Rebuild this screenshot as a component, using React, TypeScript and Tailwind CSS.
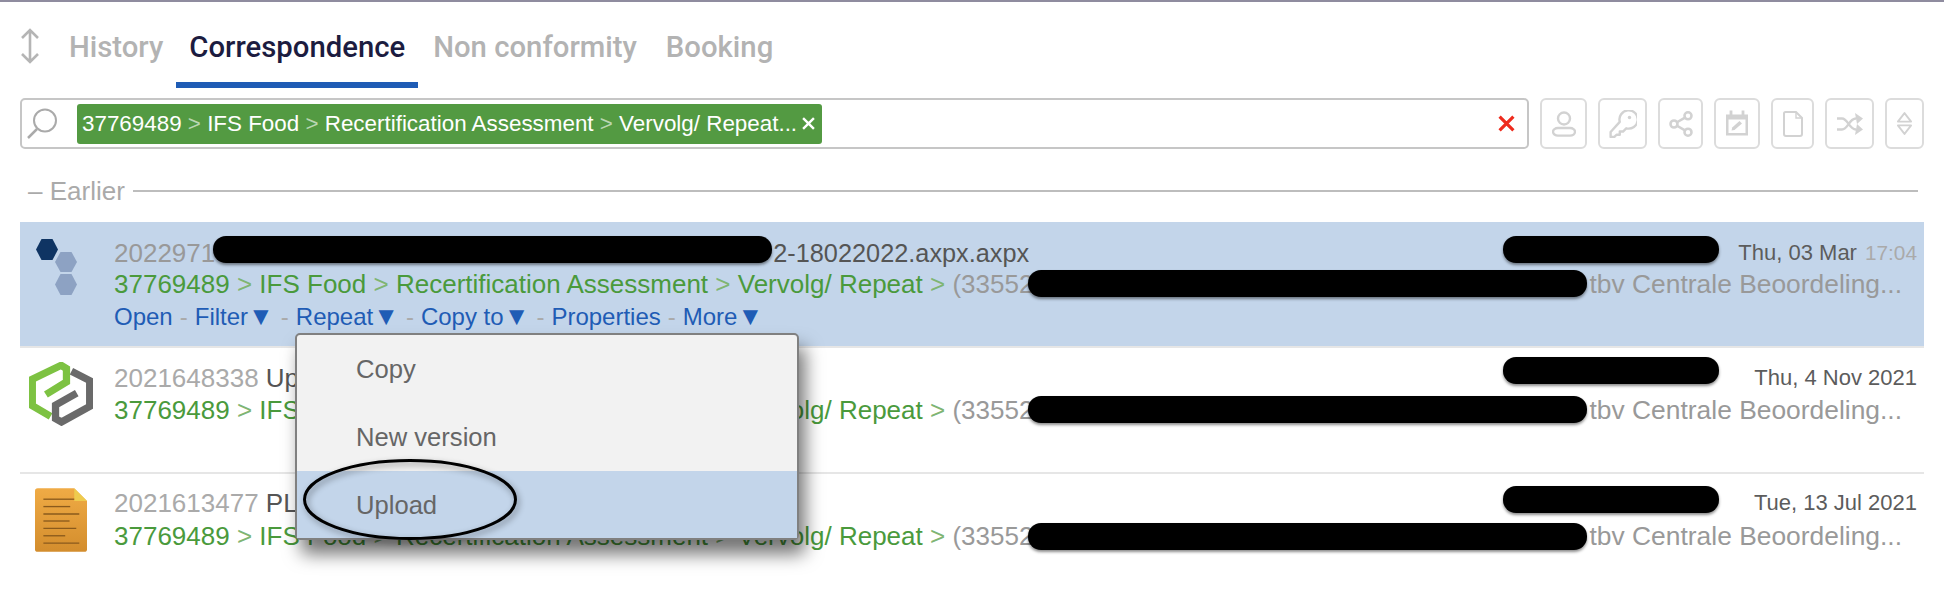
import { Share2 } from 'lucide-react';

const breadcrumb = ['37769489', 'IFS Food', 'Recertification Assessment', 'Vervolg/ Repeat'];

function Crumbs() {
  return (
    <>
      {breadcrumb.map((part) => (
        <span key={part}>
          {part} <span className="text-[#7fb573]">&gt;</span>{' '}
        </span>
      ))}
    </>
  );
}

function Redaction({ className }: { className: string }) {
  return <div className={`absolute h-[27px] rounded-[13px] bg-black shadow-[0_2px_3px_rgba(0,0,0,0.45)] ${className}`} />;
}

function Hexagons() {
  return (
    <svg viewBox="0 0 41 56" className="absolute left-[16px] top-[17px] w-[41px] h-[56px]">
      <polygon points="0,10.5 5.5,0 16.5,0 22,10.5 16.5,21 5.5,21" fill="#0f3463" />
      <polygon points="19,23 24.5,13 35.5,13 41,23 35.5,33 24.5,33" fill="#8da2c3" />
      <polygon points="19,45.5 24.5,35 35.5,35 41,45.5 35.5,56 24.5,56" fill="#8da2c3" />
    </svg>
  );
}

function HexLogo() {
  return (
    <svg viewBox="87 50 193 193" className="absolute left-[9px] top-[14px] w-[64px] h-[64px]">
      <path d="M152 214 L97 182 V102 L184 60 L200 70 V110 L138 148" fill="none" stroke="#7dc242" strokeWidth="22" />
      <path d="M215 78 L270 106 V184 L185 231 L167 221 V180 L231 144" fill="none" stroke="#6a6a6a" strokeWidth="22" />
    </svg>
  );
}

function DocIcon() {
  const lines = [
    [463, 222],
    [485, 210],
    [507, 237],
    [528, 208],
    [550, 228],
    [572, 195],
    [594, 237],
  ];
  return (
    <svg viewBox="105 430 155 190" className="absolute left-[15px] top-[14px] w-[52px] h-[64px]">
      <defs>
        <linearGradient id="doc" x1="0" y1="0" x2="0" y2="1">
          <stop offset="0" stopColor="#f0ab45" />
          <stop offset="1" stopColor="#d38d2d" />
        </linearGradient>
      </defs>
      <path d="M113 430 H222 L260 468 V612 q0 8 -8 8 H113 q-8 0 -8 -8 V438 q0 -8 8 -8z" fill="url(#doc)" />
      <path d="M222 430 L260 468 H222z" fill="#eecb4e" />
      {lines.map(([y, x2]) => (
        <line key={y} x1="130" x2={x2} y1={y} y2={y} stroke="#8a5a1c" strokeWidth="4" />
      ))}
    </svg>
  );
}

function Row({
  id,
  title,
  date,
  time,
  selected,
  rowClass,
  pathClass,
  icon,
  children,
}: {
  id: string;
  title: React.ReactNode;
  date: string;
  time?: string;
  selected?: boolean;
  rowClass: string;
  pathClass?: string;
  icon: React.ReactNode;
  children?: React.ReactNode;
}) {
  return (
    <div className={`relative h-[126px] pl-[94px] text-[26px] leading-[32px] ${rowClass} ${selected ? 'bg-[#c3d5ea]' : ''}`}>
      {icon}
      <div className="flex justify-between pr-[7px]">
        <div className="whitespace-nowrap">
          <span className={selected ? 'text-[#999]' : 'text-[#aaa]'}>{id}</span>
          <span className="text-[#555]">{title}</span>
        </div>
        <div className="text-[22px] text-[#5c5c5c] whitespace-nowrap">
          {date}
          {time && <span className="ml-[8px] text-[20.8px] text-[#aaa]">{time}</span>}
        </div>
      </div>
      <div className={`flex justify-between pr-[22px] whitespace-nowrap ${pathClass ?? ''}`}>
        <div className="text-[#4a9a3c]">
          <Crumbs />
          <span className="text-[#999]">(33552</span>
        </div>
        <div className="text-[26.4px] text-[#999]">tbv Centrale Beoordeling...</div>
      </div>
      {children}
    </div>
  );
}

function Sep() {
  return <span className="mx-[7px] text-[#aaa]">-</span>;
}

function Caret() {
  return <span className="text-[26px]">▼</span>;
}

function Actions() {
  return (
    <div className="whitespace-nowrap text-[24px] text-[#1f5cb5]">
      Open
      <Sep />
      Filter
      <Caret />
      <Sep />
      Repeat
      <Caret />
      <Sep />
      Copy to
      <Caret />
      <Sep />
      Properties
      <Sep />
      More
      <Caret />
    </div>
  );
}

const toolBtn = 'flex items-center justify-center h-[51px] border-2 border-[#dcdcdc] rounded-md text-[#d2d2d2]';

export default function App() {
  return (
    <div className="relative w-[1944px] h-[614px] overflow-hidden bg-white border-t-2 border-[#8f8c9f] px-[20px] font-['Liberation_Sans',sans-serif]">
      {/* Tabs */}
      <div className="flex items-start h-[86px]">
        <svg viewBox="0 0 20 36" className="w-[20px] h-[36px] mt-[26px] shrink-0 text-[#b5b5b5]" fill="none" stroke="currentColor" strokeWidth="2.6">
          <path d="M10 2 V34 M2 10 L10 2 L18 10 M2 26 L10 34 L18 26" />
        </svg>
        <div className="flex ml-[15px] font-['Roboto',sans-serif] font-medium text-[29.3px] leading-[36px] text-[#b3b3b3]">
          <div className="h-[86px] pt-[27px] pl-[14px] pr-[13px]">History</div>
          <div className="h-[86px] pt-[27px] px-[13px] text-[#1c1c40] border-b-[6px] border-[#1f5cb5]">Correspondence</div>
          <div className="h-[86px] pt-[27px] px-[15px]">Non conformity</div>
          <div className="h-[86px] pt-[27px] px-[14px]">Booking</div>
        </div>
      </div>

      {/* Search */}
      <div className="flex gap-[11px] mt-[10px]">
        <div className="flex items-center w-[1509px] h-[51px] border-2 border-[#c6c6c6] rounded-[5px] pl-[4px] pr-[12px]">
          <svg viewBox="0 0 32 32" className="w-[32px] h-[32px] shrink-0 text-[#aaa]" fill="none" stroke="currentColor" strokeWidth="2">
            <circle cx="19" cy="12.5" r="11" />
            <path d="M11 21 L2 30" strokeWidth="2.5" />
          </svg>
          <div className="flex items-center ml-[19px] h-[40px] w-[745px] pl-[5px] pr-[7px] rounded-[3px] bg-[#539a42] text-white text-[22.4px] whitespace-nowrap">
            <span className="flex-1">
              37769489 <span className="text-[#b9d6b2]">&gt;</span> IFS Food <span className="text-[#b9d6b2]">&gt;</span> Recertification Assessment{' '}
              <span className="text-[#b9d6b2]">&gt;</span> Vervolg/ Repeat...
            </span>
            <svg viewBox="0 0 12 12" className="w-[13px] h-[13px]" stroke="currentColor" strokeWidth="2.2">
              <path d="M1 1 L11 11 M11 1 L1 11" />
            </svg>
          </div>
          <svg viewBox="0 0 16 16" className="ml-auto w-[17px] h-[17px] text-[#ee2b1d]" stroke="currentColor" strokeWidth="3">
            <path d="M1.5 1.5 L14.5 14.5 M14.5 1.5 L1.5 14.5" />
          </svg>
        </div>
        <div className="flex gap-[11px]">
          <div className={`${toolBtn} w-[47px]`}>
            <svg viewBox="0 0 24 26" className="w-[24px] h-[26px]" fill="none" stroke="currentColor" strokeWidth="2.4">
              <circle cx="12" cy="7.5" r="6" />
              <path d="M6 17 H18 a5 3.8 0 0 1 0 7.6 H6 a5 3.8 0 0 1 0 -7.6z" />
            </svg>
          </div>
          <div className={`${toolBtn} w-[49px]`}>
            <svg viewBox="0 0 26 26" className="w-[28px] h-[28px]" fill="none" stroke="currentColor" strokeWidth="2.2">
              <path d="M10 11 a8.5 8.5 0 1 1 6 6 L13 20 H10 V23 H7 L5 25 H1.5 V20.5z" strokeLinejoin="round" />
              <circle cx="19" cy="7" r="1.6" fill="currentColor" stroke="none" />
            </svg>
          </div>
          <div className={`${toolBtn} w-[45px]`}>
            <Share2 className="w-[28px] h-[28px]" strokeWidth={2.2} />
          </div>
          <div className={`${toolBtn} w-[46px]`}>
            <svg viewBox="0 0 24 26" className="w-[24px] h-[27px]">
              <path d="M1 4 H23 V25 H1z M3.5 9 V22.5 H20.5 V9z" fill="currentColor" fillRule="evenodd" />
              <path d="M6 0 V5 M18 0 V5" stroke="currentColor" strokeWidth="2.8" />
              <path d="M6.5 20 L7.2 17 L14.5 10.5 L17 13 L9.5 19.5z" fill="currentColor" />
            </svg>
          </div>
          <div className={`${toolBtn} w-[43px]`}>
            <svg viewBox="0 0 20 26" className="w-[20px] h-[26px]" fill="none" stroke="currentColor" strokeWidth="2">
              <path d="M2.5 1 H13 L19 7 V23 a2 2 0 0 1 -2 2 H3 a2 2 0 0 1 -2 -2 V2.5 a1.5 1.5 0 0 1 1.5 -1.5z" />
              <path d="M13 1 V7 H19" strokeWidth="1.4" />
            </svg>
          </div>
          <div className={`${toolBtn} w-[49px]`}>
            <svg viewBox="0 0 26 22" className="w-[26px] h-[22px]">
              <path d="M0 5.5 H5 C11 5.5 12 16.5 19 16.5 M0 16.5 H5 C11 16.5 12 5.5 19 5.5" fill="none" stroke="currentColor" strokeWidth="2.4" />
              <path d="M18 0 L26 5.5 L20 11z M20 11 L26 16.5 L18 22z" fill="currentColor" />
            </svg>
          </div>
          <div className={`${toolBtn} w-[39px]`}>
            <svg viewBox="0 0 18 26" className="w-[17px] h-[25px]" fill="none" stroke="currentColor" strokeWidth="2">
              <path d="M2 11 L9 2 L16 11z" strokeLinejoin="round" />
              <path d="M2 15 L9 24 L16 15z" strokeLinejoin="round" />
            </svg>
          </div>
        </div>
      </div>

      {/* Earlier */}
      <div className="flex items-center gap-[8px] mt-[26px] mb-[15px] pl-[8px] pr-[6px] h-[32px] text-[26px] text-[#aaa]">
        <span className="whitespace-nowrap">– Earlier</span>
        <div className="flex-1 h-[2px] bg-[#bdbdbd]" />
      </div>

      {/* Rows */}
      <Row
        id="2022971"
        title={<span className="ml-[558px] text-[25.3px]">2-18022022.axpx.axpx</span>}
        date="Thu, 03 Mar"
        time="17:04"
        selected
        rowClass="pt-[15px] border-b-2 border-[#e6e6e6]"
        pathClass="-mt-[1px]"
        icon={<Hexagons />}
      >
        <Actions />
        <Redaction className="left-[193px] top-[14px] w-[559px]" />
        <Redaction className="left-[1483px] top-[14px] w-[216px]" />
        <Redaction className="left-[1008px] top-[48px] w-[559px]" />
      </Row>
      <Row id="2021648338" title=" Upload" date="Thu, 4 Nov 2021" rowClass="pt-[14px] border-b-2 border-[#e6e6e6]" icon={<HexLogo />}>
        <Redaction className="left-[1483px] top-[9px] w-[216px]" />
        <Redaction className="left-[1008px] top-[48px] w-[559px]" />
      </Row>
      <Row id="2021613477" title=" PL" date="Tue, 13 Jul 2021" rowClass="pt-[13px]" pathClass="mt-[1px]" icon={<DocIcon />}>
        <Redaction className="left-[1483px] top-[12px] w-[216px]" />
        <Redaction className="left-[1008px] top-[49px] w-[559px]" />
      </Row>

      {/* Repeat menu */}
      <div className="absolute left-[295px] top-[331px] w-[504px] h-[207px] border-2 border-[#808080] rounded-[5px] bg-[#f2f2f2] text-[25.6px] text-[#666] shadow-[6px_14px_18px_rgba(0,0,0,0.55)]">
        <div className="flex items-center h-[68px] pl-[59px]">Copy</div>
        <div className="flex items-center h-[68px] pl-[59px]">New version</div>
        <div className="flex items-center h-[67px] pt-[2px] pl-[59px] bg-[#c3d5ea]">Upload</div>
        <svg viewBox="0 0 214 81" className="absolute left-[6px] top-[124px] w-[214px] h-[81px] overflow-visible drop-shadow-[2px_3px_3px_rgba(0,0,0,0.4)]" fill="none">
          <ellipse cx="107" cy="40.5" rx="105.5" ry="39" stroke="#000" strokeWidth="3" />
        </svg>
      </div>
    </div>
  );
}
